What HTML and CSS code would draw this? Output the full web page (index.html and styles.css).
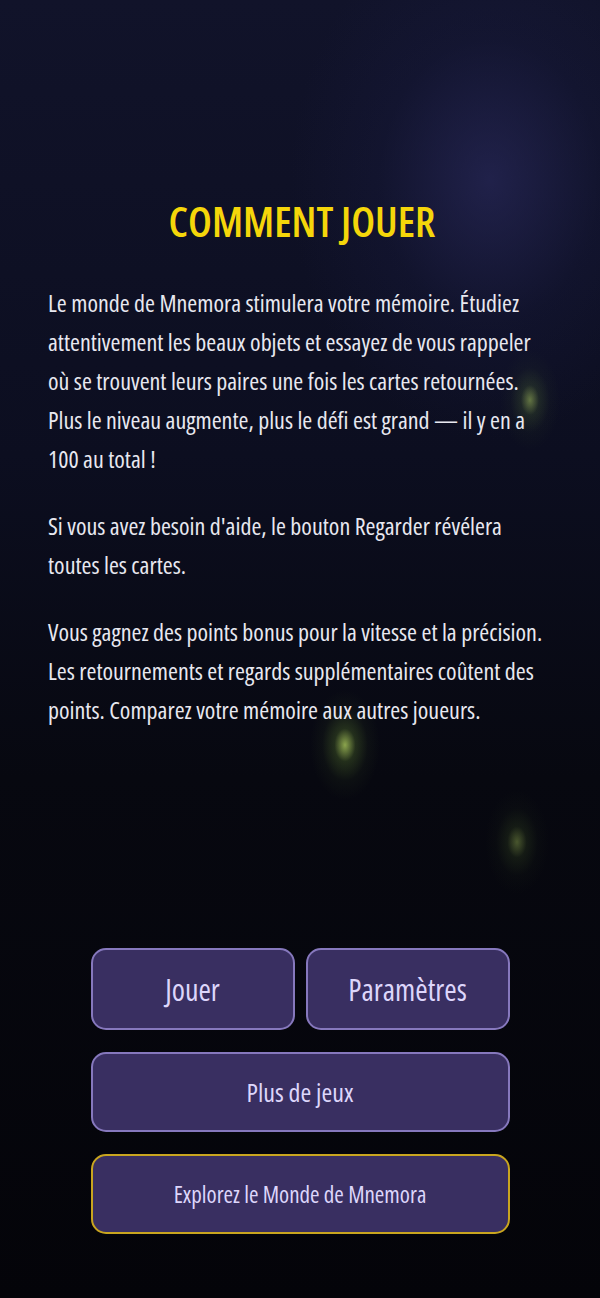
FILE: index.html
```html
<!DOCTYPE html>
<html lang="fr">
<head>
    <meta charset="UTF-8">
    <meta name="viewport" content="width=device-width, initial-scale=1.0">
    <title>Comment jouer</title>
    <link rel="stylesheet" href="styles.css">
</head>
<body>
    <div class="screen">
        <span class="glow"></span>
        <span class="firefly f1"></span>
        <span class="firefly f2"></span>
        <span class="firefly f3"></span>

        <div class="rules">
            <h1>COMMENT JOUER</h1>
            <p>Le monde de Mnemora stimulera votre mémoire. Étudiez attentivement les beaux objets et essayez de vous rappeler où se trouvent leurs paires une fois les cartes retournées. Plus le niveau augmente, plus le défi est grand — il y en a 100 au total !</p>
            <p>Si vous avez besoin d'aide, le bouton Regarder révélera toutes les cartes.</p>
            <p>Vous gagnez des points bonus pour la vitesse et la précision. Les retournements et regards supplémentaires coûtent des points. Comparez votre mémoire aux autres joueurs.</p>
        </div>

        <div class="menu">
            <div class="row">
                <button class="btn big">Jouer</button>
                <button class="btn big">Paramètres</button>
            </div>
            <button class="btn mid">Plus de jeux</button>
            <button class="btn small gold">Explorez le Monde de Mnemora</button>
        </div>
    </div>
</body>
</html>
```
FILE: styles.css
```css
html, body {
    margin: 0;
    height: 100%;
}
body {
    font-family: "Open Sans", "Liberation Sans", sans-serif;
    font-stretch: 75%;
    background: #05060d;
    overflow: hidden;
}
.screen {
    position: relative;
    height: 1298px;
    background: linear-gradient(180deg, #11132a 0%, #0c0e20 35%, #07081250 60%, #040409 100%), #07080f;
    display: flex;
    flex-direction: column;
    overflow: hidden;
}
.glow {
    position: absolute;
    left: 290px;
    top: -80px;
    width: 400px;
    height: 520px;
    border-radius: 50%;
    background: radial-gradient(closest-side, rgba(44, 44, 98, 0.6), rgba(28, 30, 72, 0.25) 55%, rgba(20, 20, 60, 0) 100%);
}
.firefly {
    position: absolute;
    border-radius: 50%;
    background: radial-gradient(closest-side, rgba(190, 225, 100, 0.8), rgba(110, 150, 55, 0.3) 30%, rgba(70, 95, 40, 0.1) 65%, rgba(0, 0, 0, 0) 100%);
}
.f1 { left: 500px; top: 350px; width: 60px; height: 100px; opacity: 0.6; }
.f2 { left: 310px; top: 690px; width: 70px; height: 110px; opacity: 0.9; }
.f3 { left: 485px; top: 790px; width: 64px; height: 104px; opacity: 0.45; }
.rules {
    position: relative;
    padding: 195px 44px 0 48px;
}
h1 {
    margin: 0 0 36px;
    text-align: center;
    color: #f5d60a;
    font-size: 42px;
    font-weight: 600;
    line-height: 52px;
}
p {
    margin: 0 0 28px;
    color: #e8e8f0;
    font-size: 24px;
    line-height: 39px;
}
.menu {
    position: relative;
    margin-top: auto;
    margin-bottom: 64px;
    align-self: center;
    width: 419px;
    display: flex;
    flex-direction: column;
    gap: 22px;
}
.row {
    display: flex;
    gap: 11px;
}
.btn {
    height: 80px;
    border: 2px solid #8678bd;
    border-radius: 15px;
    background: #392f61;
    color: #ddd6fb;
    font-family: inherit;
    font-stretch: 75%;
    cursor: pointer;
}
.row .btn {
    flex: 1;
    height: 82px;
}
.big { font-size: 30px; }
.mid { font-size: 26px; }
.small { font-size: 23px; }
.gold { border-color: #c9a51f; }
```
